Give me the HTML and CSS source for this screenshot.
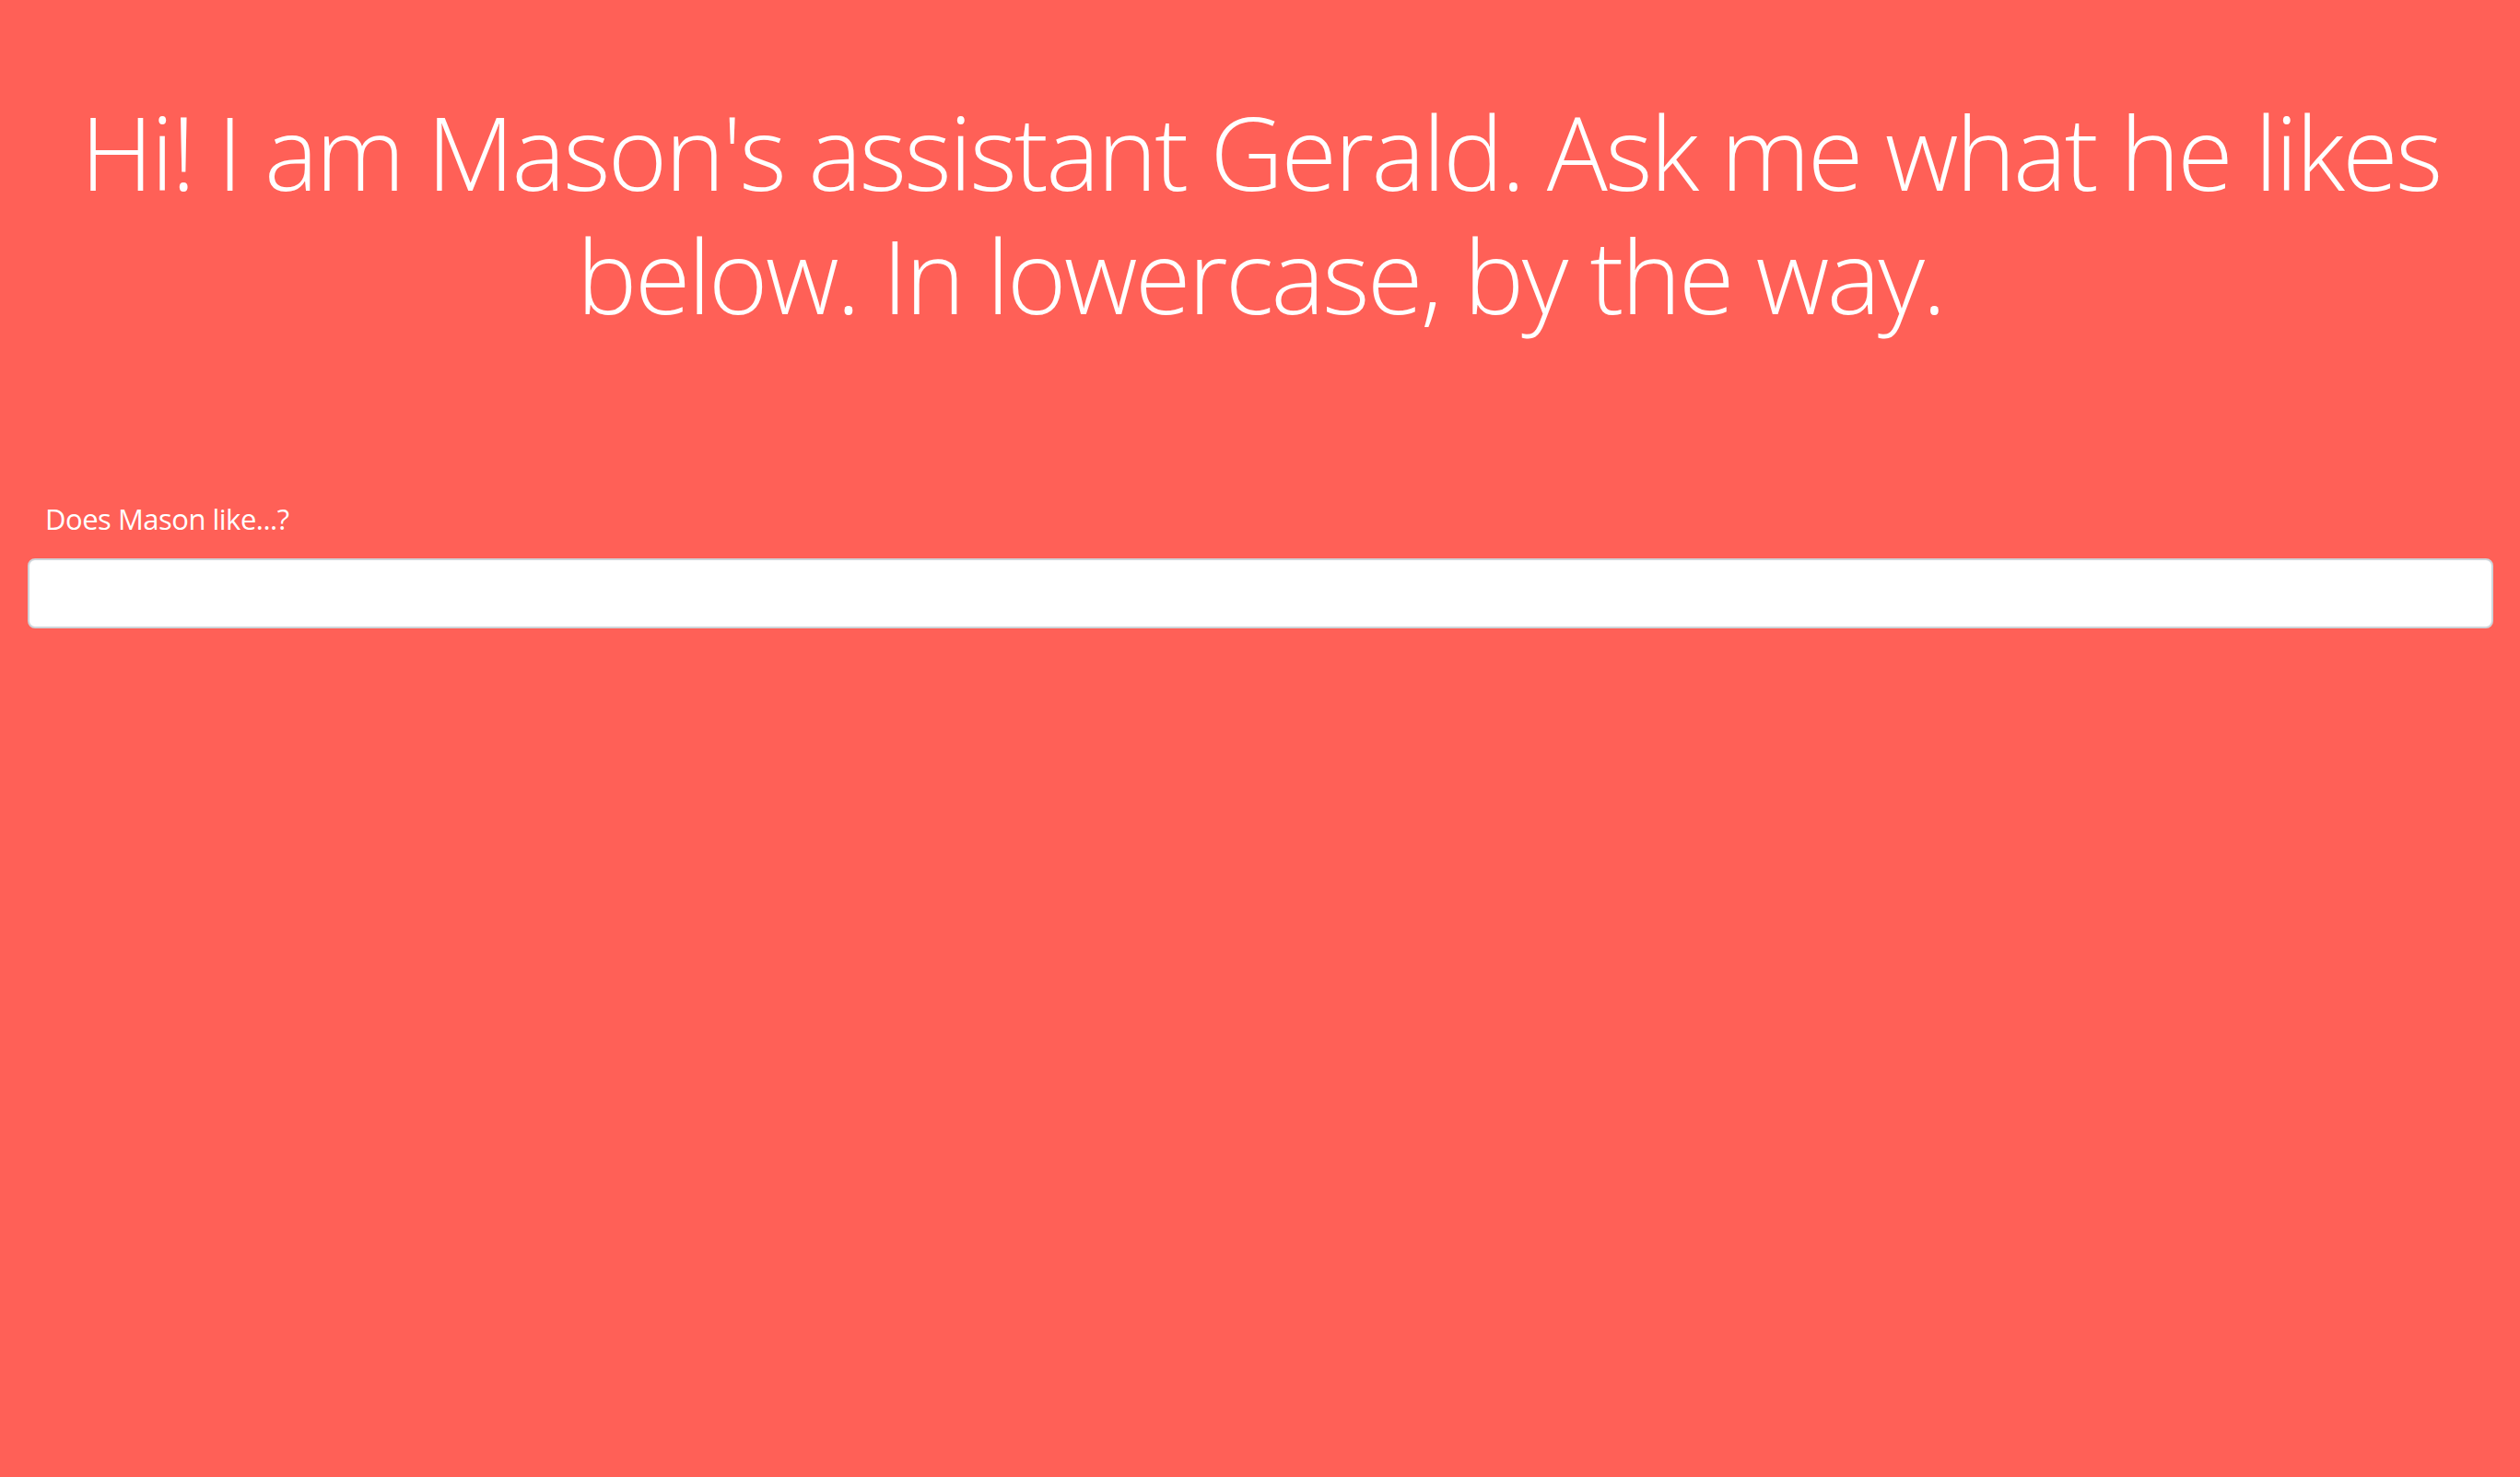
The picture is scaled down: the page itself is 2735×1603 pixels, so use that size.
FILE: index.html
```html
<!DOCTYPE html>
<html lang="en">
<head>
<meta charset="utf-8">
<title>Gerald</title>
<link rel="stylesheet" href="styles.css">
</head>
<body>
<main class="page">
  <h1 class="title">Hi! I am Mason's assistant Gerald. Ask me what he likes below. In lowercase, by the way.</h1>
  <form class="ask">
    <label class="ask-label" for="q">Does Mason like...?</label>
    <input class="ask-input" id="q" type="text">
  </form>
</main>
</body>
</html>
```

FILE: styles.css
```css
html, body {
  margin: 0;
  padding: 0;
  background: #ff6057;
  height: 100%;
}
body {
  font-family: "Open Sans", "Noto Sans", sans-serif;
  color: #ffffff;
}
.page {
  padding: 0 29px 0 30px;
  display: flex;
  flex-direction: column;
}
.title {
  margin: 97px 0 0 0;
  font-size: 110px;
  line-height: 134px;
  font-weight: 300;
  text-align: center;
  letter-spacing: -2.6px;
}
.ask {
  display: flex;
  flex-direction: column;
  margin-top: 174px;
}
.ask-label {
  font-size: 31px;
  line-height: 48px;
  padding-left: 19px;
  margin-bottom: 19px;
  letter-spacing: -0.5px;
}
.ask-input {
  box-sizing: border-box;
  height: 76px;
  width: 100%;
  border: 2px solid #cfd3d8;
  border-radius: 8px;
  background: #ffffff;
  font-size: 32px;
  padding: 0 20px;
  outline: none;
}
```
